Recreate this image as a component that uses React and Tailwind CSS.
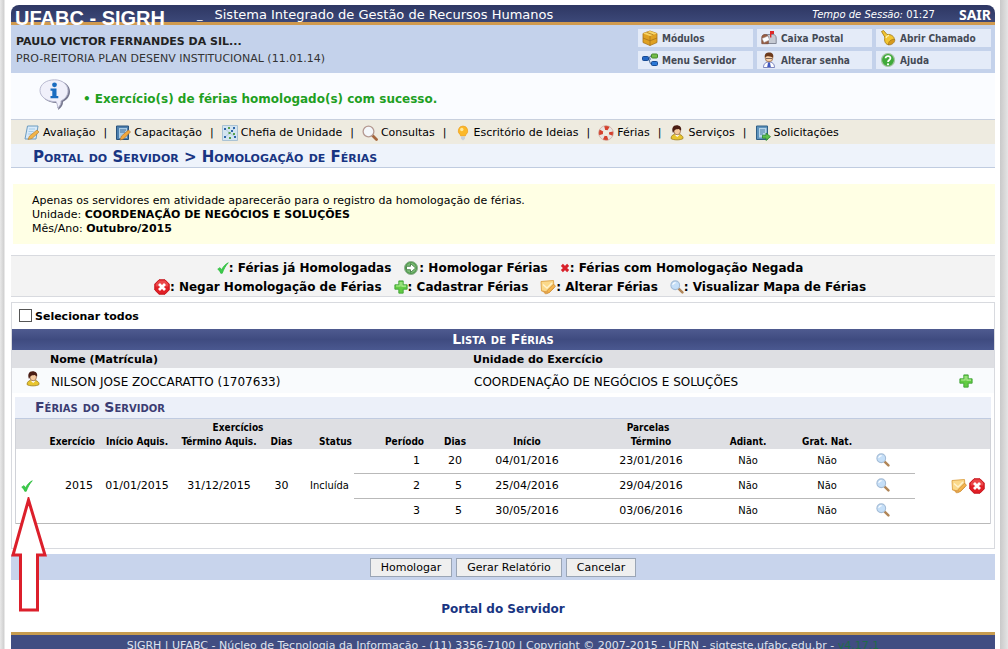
import React from "react";

function Svg({ size = 16, children }) {
  return (
    <svg width={size} height={size} viewBox="0 0 16 16" className="inline-block shrink-0" aria-hidden="true">
      {children}
    </svg>
  );
}

const Check = ({ size = 12 }) => (
  <Svg size={size}>
    <path d="M1 9.5 L4 7.5 L6 10.5 C8 6.5 11 3 15 1 C11.5 5 9 9.5 7 15 L5 15 C4.2 12.5 2.8 10.8 1 9.5Z" fill="#3ccb4b" stroke="#27b937" strokeWidth="1" />
  </Svg>
);
const Deny = () => (
  <Svg>
    <path d="M5 .8h6L15.2 5v6L11 15.2H5L.8 11V5Z" fill="#e11f26" stroke="#c3131a" />
    <path d="M5 1.6h6L14.3 5v2.5H1.7V5Z" fill="#f05a5a" opacity=".7" />
    <path d="M5 5l6 6M11 5l-6 6" stroke="#fff" strokeWidth="2.8" />
  </Svg>
);
const Plus = ({ size = 14 }) => (
  <Svg size={size}>
    <path d="M5.5 1h5v4.5H15v5h-4.5V15h-5v-4.5H1v-5h4.5Z" fill="#62cc42" stroke="#3fa036" />
    <path d="M7 2.3v4.6H2.4M9 2.3V7h4.7" fill="none" stroke="#b5ec98" strokeWidth="1.2" />
  </Svg>
);
const Go = () => (
  <Svg>
    <circle cx="8" cy="8" r="6.500" fill="#4f9a4a" stroke="#8faf90" />
    <circle cx="8" cy="8" r="5" fill="#7dbb78" />
    <path d="M3.500 6.300h4V3.600L12.600 8l-5.100 4.400V9.700h-4Z" fill="#fff" stroke="#39733a" strokeWidth=".8" />
  </Svg>
);
const SmallX = () => (
  <Svg size={10}>
    <path d="M3 3l10 10M13 3L3 13" stroke="#d8202a" strokeWidth="4.600" />
  </Svg>
);
const EditNote = () => (
  <Svg>
    <path d="M1 2.500 13.500 1.500 14 9 9 13.500 1.500 12Z" fill="#fbd98a" stroke="#dca244" strokeWidth=".9" />
    <path d="M3 5.500l4 3.500 5-5" fill="none" stroke="#fff3cf" strokeWidth="1.400" />
    <path d="M6.500 14.800l.8-3.400 6.200-6.200 2 2-6 6.200Z" fill="#f6b44b" stroke="#c88a3a" strokeWidth=".8" />
    <path d="M2 11.500l5 1-1.500 3Z" fill="#dfa04a" />
  </Svg>
);
const Lens = ({ size = 14 }) => (
  <Svg size={size}>
    <path d="M9.800 9.800l4.400 4.400" stroke="#b08557" strokeWidth="2.800" strokeLinecap="round" />
    <circle cx="6" cy="6" r="5" fill="#c5dff8" stroke="#a4bcd6" strokeWidth="1.200" />
    <path d="M3 5.500c.6-1.600 1.800-2.400 3.400-2.500" stroke="#fff" strokeWidth="1.200" fill="none" />
  </Svg>
);
const BigLens = () => (
  <Svg>
    <path d="M10.500 10.500l4 4" stroke="#a6683f" strokeWidth="2.800" strokeLinecap="round" />
    <circle cx="6.500" cy="6.500" r="5.400" fill="#f4f7fa" stroke="#b59a92" strokeWidth="1.300" />
  </Svg>
);
const Person = () => (
  <Svg>
    <path d="M2 13.500c0-3 2.500-4.500 5.500-4.500s7 1.400 6.500 4.500c-2 1.800-10 1.800-12 0Z" fill="#e8c52e" stroke="#9c7c1c" strokeWidth=".8" />
    <path d="M5.500 9.500l2.700 2.500 2.600-2.500Z" fill="#fff" />
    <ellipse cx="8.200" cy="6" rx="3.300" ry="3.800" fill="#f5caa0" stroke="#7a4a2a" strokeWidth=".6" />
    <path d="M4 8C2.300 3.500 4 .4 7.500.3c3.500 0 5.300 2.200 4.600 5.200-1-.4-1.300-1-2.200-1.600C8 4.200 6.500 4 5.500 5.200Z" fill="#4a1d14" />
  </Svg>
);
const Notepad = () => (
  <Svg>
    <path d="M3.500 1h10.500l-2 13H1Z" fill="#d7eafa" stroke="#6d9cc0" />
    <path d="M5 4h6M4.600 6.500h5M4.200 9h4" stroke="#a5cbe6" />
    <path d="M4 14.500l1.500-3.500L13 5l2 2-7 6.500Z" fill="#f3b548" stroke="#b8843a" strokeWidth=".7" />
  </Svg>
);
const BookPen = () => (
  <Svg>
    <path d="M1.500 1h12v13.500h-12Z" fill="#4c7fae" stroke="#28527c" />
    <path d="M4 3h8v10H4Z" fill="#a9cbe6" />
    <path d="M5 5h6M5 7h5" stroke="#3c6b98" />
    <path d="M5 15l1.500-4L13.500 5l2 2-7 7Z" fill="#f3a83b" stroke="#b07330" strokeWidth=".7" />
  </Svg>
);
const Chart = () => (
  <Svg>
    <path d="M.5.5h15v15H.5Z" fill="#d3e4f0" stroke="#a9c2d4" />
    <path d="M3 4l5 4 5-5M3 12l5-4 5 4" stroke="#a9c4d8" fill="none" strokeWidth=".8" />
    <path d="M2 3h2v2H2ZM11 2h2v2h-2ZM2 11h2v2H2ZM12 11h2v2h-2ZM9 5h2v2H9Z" fill="#2f66a8" />
    <path d="M6.500 7h2v2h-2ZM6 2h2v2H6ZM7 12h2v2H7ZM11 8h2v2h-2Z" fill="#55a04c" />
  </Svg>
);
const Bulb = () => (
  <Svg>
    <path d="M8 1a4.800 4.800 0 0 1 3 8.500L10.300 11H5.700L5 9.500A4.800 4.800 0 0 1 8 1Z" fill="#fbb829" stroke="#eea024" strokeWidth=".7" />
    <circle cx="6.800" cy="4.500" r="1.700" fill="#ffe79a" />
    <path d="M6 11.500h4v2.300L8 15.500l-2-1.700Z" fill="#c7d0da" />
  </Svg>
);
const Buoy = () => (
  <Svg>
    <circle cx="8" cy="8" r="5.200" fill="none" stroke="#e8e4e2" strokeWidth="4.200" />
    <circle cx="8" cy="8" r="5.200" fill="none" stroke="#d5402c" strokeWidth="4.200" strokeDasharray="4.100 4.070" strokeDashoffset="2" />
    <circle cx="8" cy="8" r="7.300" fill="none" stroke="#c99a8e" strokeWidth=".6" />
  </Svg>
);
const BookGo = () => (
  <Svg>
    <path d="M1.500 1h11v13.500h-11Z" fill="#5f94bd" stroke="#2f5f86" />
    <path d="M4 3h7.500v9.500H4Z" fill="#b5d4ea" />
    <path d="M5 5h5M5 7h5M5 9h3" stroke="#4a7ca6" />
    <path d="M7.500 10.200h3.500V8l4.500 3.700-4.500 3.800v-2.300H7.500Z" fill="#5cc04b" stroke="#2c8430" strokeWidth=".8" />
  </Svg>
);
const Box = () => (
  <Svg>
    <path d="M1 3.500L8 1l7 2.500v9L8 15.500 1 12.500Z" fill="#dfa122" stroke="#a8731a" strokeWidth=".8" />
    <path d="M1 3.500L8 6l7-2.500L8 1Z" fill="#f8d567" />
    <path d="M8 6v9.500M1 8l7 2.800L15 8M4.500 2.300l7 2.600" stroke="#a8731a" fill="none" strokeWidth=".8" />
  </Svg>
);
const Nodes = () => (
  <Svg>
    <path d="M6 7h3M12 3.500H9.500C7.500 3.500 8 7 6 7c2 0 1.500 5.500 3.500 5.500H12" stroke="#3a5d8c" fill="none" />
    <rect x=".5" y="4.500" width="6" height="4" rx="1" fill="#2467c4" stroke="#184a92" />
    <rect x="9.500" y="2" width="6" height="4" rx="1" fill="#74bb4b" stroke="#43892b" />
    <rect x="9.500" y="9.500" width="6" height="4" rx="1" fill="#2b78d6" stroke="#184a92" />
  </Svg>
);
const Mailbox = () => (
  <Svg>
    <path d="M5 4.500h7c2 0 3.200 1.500 3.200 3.500v5.500H5Z" fill="#c6cad3" stroke="#7a808f" strokeWidth=".9" />
    <path d="M.8 7.500C.8 5.500 2.300 4.500 4 4.500s3.300 1 3.300 3v6.200H.8Z" fill="#9c5f42" stroke="#7b4d3c" strokeWidth=".8" />
    <path d="M1 8.500l6-2.500 1.500 4-5.500 2.500Z" fill="#fff" stroke="#9b9ba5" strokeWidth=".5" />
    <path d="M9 7.500V1h4v3h-2.600v3.500Z" fill="#dd2929" />
  </Svg>
);
const Bell = () => (
  <Svg>
    <path d="M1.500 1.500l2-1L7 4.500c4-.5 7.500 2 7.300 5L9 14.800C5.500 14.500 4 11.500 4.800 7Z" fill="#f2c531" stroke="#a8801a" strokeWidth=".9" />
    <path d="M8.500 14.800c-.5-3 2.500-6 6.300-5.300.6 2.500-3 6-6.300 5.300Z" fill="#d69a1e" stroke="#96691a" strokeWidth=".6" />
    <path d="M6 8c.3-1.500 1.200-2.300 3-2.600" stroke="#fff0a8" fill="none" strokeWidth="1.300" />
  </Svg>
);
const Doctor = () => (
  <Svg>
    <path d="M2.500 15.500c0-4 2.500-5.500 5.500-5.500s5.500 1.500 5.500 5.500Z" fill="#fff" stroke="#7079b8" strokeWidth=".9" />
    <path d="M7 10.500h2l.8 4.500H6.200Z" fill="#4058c0" />
    <circle cx="8" cy="6" r="3.800" fill="#f9d2ab" stroke="#8c5a35" strokeWidth=".7" />
    <path d="M3.800 5.500C3.300 1.800 5.500.5 8.300.5c2.700 0 4.600 1.800 3.900 5C10 4.600 6.500 3 3.800 5.500Z" fill="#6c3a1c" />
    <path d="M5 6.500h6" stroke="#5a4a48" strokeWidth=".8" />
  </Svg>
);
const Help = () => (
  <Svg>
    <circle cx="8" cy="8" r="6.500" fill="#3faa3a" stroke="#a5c4a3" strokeWidth="1.200" />
    <path d="M5.600 6.300C5.600 3.300 10.600 3.400 10.400 6.300 10.300 8 8 8 8 10" stroke="#fff" strokeWidth="1.800" fill="none" />
    <circle cx="8" cy="12.300" r="1.100" fill="#fff" />
  </Svg>
);

function InfoBalloon() {
  return (
    <svg width="32" height="32" viewBox="0 0 32 32" className="shrink-0" aria-hidden="true">
      <path d="M17 1.500c8.500 0 14 5 14 11 0 4.500-3 8.500-7 10.300.2 3-1.200 5.700-5 8.200.8-2.700 0-5.300-1.500-7C8.500 24 2.500 19 2.500 12.500 2.500 6 8.500 1.500 17 1.500Z" fill="#77788f" />
      <path d="M15.500.8c8.300 0 13.500 5 13.500 11 0 4.500-3 8.300-7 10 .3 2.700-.8 5-3.500 7.300.2-2.500-.3-4.700-1.500-6.500C8.500 23 1 18 1 11.500 1 5.300 7.200.8 15.500.8Z" fill="#f0f0fa" stroke="#b9bad0" />
      <circle cx="15.500" cy="5.800" r="2.400" fill="#1a6cc0" />
      <path d="M11.500 9.500h6v7.500h1.800v2.200h-7.800V17h1.800v-5.300h-1.800Z" fill="#1a6cc0" />
    </svg>
  );
}

const shortcuts = [
  [Box, "Módulos"],
  [Mailbox, "Caixa Postal"],
  [Bell, "Abrir Chamado"],
  [Nodes, "Menu Servidor"],
  [Doctor, "Alterar senha"],
  [Help, "Ajuda"],
];
const menu = [
  [Notepad, "Avaliação"],
  [BookPen, "Capacitação"],
  [Chart, "Chefia de Unidade"],
  [BigLens, "Consultas"],
  [Bulb, "Escritório de Ideias"],
  [Buoy, "Férias"],
  [Person, "Serviços"],
  [BookGo, "Solicitações"],
];
const legend = [
  [
    [Check, "Férias já Homologadas"],
    [Go, "Homologar Férias"],
    [SmallX, "Férias com Homologação Negada"],
  ],
  [
    [Deny, "Negar Homologação de Férias"],
    [Plus, "Cadastrar Férias"],
    [EditNote, "Alterar Férias"],
    [Lens, "Visualizar Mapa de Férias"],
  ],
];
const parcels = [
  ["1", "20", "04/01/2016", "23/01/2016"],
  ["2", "5", "25/04/2016", "29/04/2016"],
  ["3", "5", "30/05/2016", "03/06/2016"],
];

function Header() {
  return (
    <header>
      <div className="flex h-5 items-center rounded-t-lg border-b-[3px] border-[#d09a4e] bg-linear-to-b from-[#2e3763] to-[#3c4878] text-white">
        <h1 className="pt-2 pl-1 font-['Liberation_Sans',sans-serif] text-[20px] leading-5 font-bold">UFABC - SIGRH</h1>
        <span className="pt-1 pl-8 text-[11px]">_</span>
        <span className="flex-1 pt-0.5 pl-3 text-[13px] whitespace-nowrap">Sistema Integrado de Gestão de Recursos Humanos</span>
        <span className="pt-0.5 text-[10px]">
          <i>Tempo de Sessão:</i> 01:27
        </span>
        <a href="#sair" className="pt-0.5 pr-1 pl-6 font-['Noto_Sans',sans-serif] text-[14px] leading-4 font-bold">SAIR</a>
      </div>
      <div className="flex h-12 justify-between bg-[#c4d2eb]">
        <div className="pt-2 pl-[5px] text-[11px] leading-[17px] text-[#222]">
          <p className="font-bold">PAULO VICTOR FERNANDES DA SIL...</p>
          <p className="text-[#333]">PRO-REITORIA PLAN DESENV INSTITUCIONAL (11.01.14)</p>
        </div>
        <nav className="grid grid-cols-[repeat(3,115px)] content-center gap-1 pr-1">
          {shortcuts.map(([Icon, label]) => (
            <a key={label} href="#atalho" className="flex h-[18px] items-center gap-1 bg-[#e4ebf8] pl-1 font-['DejaVu_Sans_Condensed','DejaVu_Sans',sans-serif] text-[10px] font-bold text-[#444a55]">
              <Icon />
              {label}
            </a>
          ))}
        </nav>
      </div>
    </header>
  );
}

function VacationTable() {
  const th = "align-bottom font-bold";
  return (
    <table className="w-full table-fixed border-separate border-spacing-0 border-x border-[#d0d2d8] text-center text-[11px]">
      <caption className="h-[22px] border-b border-[#c0cbe0] bg-[#ecf0f9] pl-5 text-left text-[14px] leading-[21px] font-bold text-[#3b3d73] [font-variant:small-caps]">
        Férias do Servidor
      </caption>
      <colgroup>
        <col className="w-[24px]" />
        <col className="w-[58px]" />
        <col className="w-[78px]" />
        <col className="w-[86px]" />
        <col className="w-[39px]" />
        <col className="w-[53px]" />
        <col className="w-[70px]" />
        <col className="w-[42px]" />
        <col className="w-[122px]" />
        <col className="w-[126px]" />
        <col className="w-[68px]" />
        <col className="w-[90px]" />
        <col className="w-[43px]" />
        <col className="w-[75px]" />
      </colgroup>
      <thead className="bg-[#dedfe3] font-['DejaVu_Sans_Condensed','DejaVu_Sans',sans-serif] text-[10px] leading-[14px] whitespace-nowrap">
        <tr>
          <td />
          <th colSpan={6} className="pt-0.5 pl-3">Exercícios</th>
          <th colSpan={5} className="pt-0.5">Parcelas</th>
          <td colSpan={2} />
        </tr>
        <tr>
          <td />
          <th className={th + " pr-[3px] text-right"}>Exercício</th>
          <th className={th}>Início Aquis.</th>
          <th className={th}>Término Aquis.</th>
          <th className={th}>Dias</th>
          <th className={th + " pl-4"}>Status</th>
          <th className={th + " text-right"}>Período</th>
          <th className={th + " text-right"}>Dias</th>
          <th className={th}>Início</th>
          <th className={th}>Término</th>
          <th className={th}>Adiant.</th>
          <th className={th}>Grat. Nat.</th>
          <td colSpan={2} />
        </tr>
      </thead>
      <tbody>
        {parcels.map((p, i) => {
          const line = "h-[25px] border-b border-[#b9b9b9]";
          const all = "border-b border-[#b9b9b9]";
          const narrow = " font-['DejaVu_Sans_Condensed','DejaVu_Sans',sans-serif]";
          return (
            <tr key={p[0]}>
              {i === 0 && (
                <>
                  <td rowSpan={3} className={all}>
                    <div className="relative ml-[5px] flex w-3">
                      <Check />
                      <svg width="36" height="116" viewBox="0 0 36 116" className="absolute top-[17px] -left-[10px] z-10 max-w-none" aria-hidden="true">
                        <path d="M17.500 3L34 58H26.500V113H9.500V58H2Z" fill="#fff" stroke="#dc1f2b" strokeWidth="3" />
                      </svg>
                    </div>
                  </td>
                  <td rowSpan={3} className={all + " pr-[5px] text-right"}>2015</td>
                  <td rowSpan={3} className={all}>01/01/2015</td>
                  <td rowSpan={3} className={all}>31/12/2015</td>
                  <td rowSpan={3} className={all}>30</td>
                  <td rowSpan={3} className={all + narrow + " pl-1"}>Incluída</td>
                </>
              )}
              <td className={line + " pr-1 text-right"}>{p[0]}</td>
              <td className={line + " pr-1 text-right"}>{p[1]}</td>
              <td className={line}>{p[2]}</td>
              <td className={line}>{p[3]}</td>
              <td className={line + narrow}>Não</td>
              <td className={line + narrow}>Não</td>
              <td className={line}>
                <button type="button" aria-label="Visualizar" className="mb-0.5 ml-1 flex"><Lens /></button>
              </td>
              {i === 0 && (
                <td rowSpan={3} className={all}>
                  <div className="flex justify-end gap-0.5 pr-[5px]">
                    <button type="button" aria-label="Alterar" className="flex"><EditNote /></button>
                    <button type="button" aria-label="Negar" className="flex"><Deny /></button>
                  </div>
                </td>
              )}
            </tr>
          );
        })}
      </tbody>
    </table>
  );
}

export default function App() {
  const button = "h-[19px] border border-[#9aa5b5] bg-[#efefef] px-2.5 text-[11px] leading-none text-black";
  return (
    <div className="flex min-h-screen bg-white font-['DejaVu_Sans',Verdana,sans-serif] text-[11px] text-black">
      <div className="w-[5px] shrink-0 border-r border-[#e8e8e8] bg-linear-to-r from-[#e9e9e9] to-[#cfcfcf]" />
      <main className="min-w-0 flex-1 pt-[5px] pr-[5px] pl-1.5">
        <Header />
        <div role="status" className="flex h-[46px] gap-3 bg-[#fafcff] pt-1.5 pl-7">
          <InfoBalloon />
          <p className="pt-3 text-[12px] leading-4 font-bold text-[#1fa01f]">• Exercício(s) de férias homologado(s) com sucesso.</p>
        </div>
        <nav className="flex h-[25px] items-center gap-2 border-t border-[#c8d0de] bg-[#eeebe0] pt-0.5 pl-[13px] whitespace-nowrap">
          {menu.map(([Icon, label], i) => (
            <React.Fragment key={label}>
              {i > 0 && <span>|</span>}
              <a href="#menu" className="flex items-center gap-[3px]">
                <Icon />
                {label}
              </a>
            </React.Fragment>
          ))}
        </nav>
        <h2 className="h-6 border-b border-[#c0cce0] bg-[#eef3fb] pl-[22px] text-[15px] leading-[26px] font-bold text-[#183582] [font-variant:small-caps]">
          Portal do Servidor &gt; Homologação de Férias
        </h2>
        <section className="mt-4 ml-[2px] h-[60px] bg-[#ffffe4] pt-2.5 pl-[19px] leading-[14px]">
          <p>Apenas os servidores em atividade aparecerão para o registro da homologação de férias.</p>
          <p>Unidade: <b>COORDENAÇÃO DE NEGÓCIOS E SOLUÇÕES</b></p>
          <p>Mês/Ano: <b>Outubro/2015</b></p>
        </section>
        <section className="mt-[11px] h-[42px] border-y border-[#d8dadf] bg-[#f3f3f3] pt-0.5 pl-3.5 text-[12px] font-bold">
          {legend.map((row, i) => (
            <div key={i} className="flex h-[19px] items-center justify-center gap-3 whitespace-nowrap">
              {row.map(([Icon, label]) => (
                <span key={label} className="flex items-center">
                  <Icon />: {label}
                </span>
              ))}
            </div>
          ))}
        </section>
        <section className="mt-[5px] border border-[#d8dadf] pb-6">
          <label className="flex h-[26px] items-center gap-[3px] pt-0.5 pl-[7px] font-bold">
            <input type="checkbox" className="mb-1 size-[13px] appearance-none border border-[#555] bg-white" />
            Selecionar todos
          </label>
          <table className="w-full table-fixed border-collapse text-left">
            <caption className="h-[21px] bg-linear-to-b from-[#4f5b90] via-[#3f4b80] to-[#4a5890] text-[14px] leading-[21px] font-bold text-white [font-variant:small-caps]">
              Lista de Férias
            </caption>
            <colgroup>
              <col className="w-[38px]" />
              <col className="w-[423px]" />
              <col className="w-[486px]" />
              <col className="w-[35px]" />
            </colgroup>
            <thead>
              <tr className="h-[18px] bg-[#dedfe3] leading-4">
                <td />
                <th className="pt-0.5">Nome (Matrícula)</th>
                <th className="pt-0.5">Unidade do Exercício</th>
                <td />
              </tr>
            </thead>
            <tbody>
              <tr className="h-[25px] bg-[#f9fbfd] text-[12px]">
                <td className="pb-1 pl-[13px]"><div className="flex"><Person /></div></td>
                <td className="pt-0.5 pl-px">NILSON JOSE ZOCCARATTO (1707633)</td>
                <td className="pt-0.5 pl-px">COORDENAÇÃO DE NEGÓCIOS E SOLUÇÕES</td>
                <td><button type="button" aria-label="Cadastrar" className="flex"><Plus /></button></td>
              </tr>
            </tbody>
          </table>
          <div className="px-[3px] pt-1">
            <VacationTable />
          </div>
        </section>
        <div className="mt-[5px] flex h-[26px] items-center justify-center gap-1 bg-[#c8d4ec]">
          <button type="button" className={button}>Homologar</button>
          <button type="button" className={button}>Gerar Relatório</button>
          <button type="button" className={button}>Cancelar</button>
        </div>
        <div className="flex h-[52px] items-center justify-center pt-1.5">
          <a href="#portal" className="text-[12px] font-bold text-[#183582]">Portal do Servidor</a>
        </div>
        <footer className="h-[17px] overflow-hidden border-t-[3px] border-[#c79c4f] bg-[#414d82] pt-1 text-center text-[11px] leading-[14px] whitespace-nowrap text-[#dfe3ee]">
          SIGRH | UFABC - Núcleo de Tecnologia da Informação - (11) 3356-7100 | Copyright © 2007-2015 - UFRN - sigteste.ufabc.edu.br - <span className="text-[#1f6a4a]">v4.17.1</span>
        </footer>
      </main>
      <div className="w-2 shrink-0 bg-linear-to-r from-[#c9c9c9] to-[#e4e4e4]" />
    </div>
  );
}
